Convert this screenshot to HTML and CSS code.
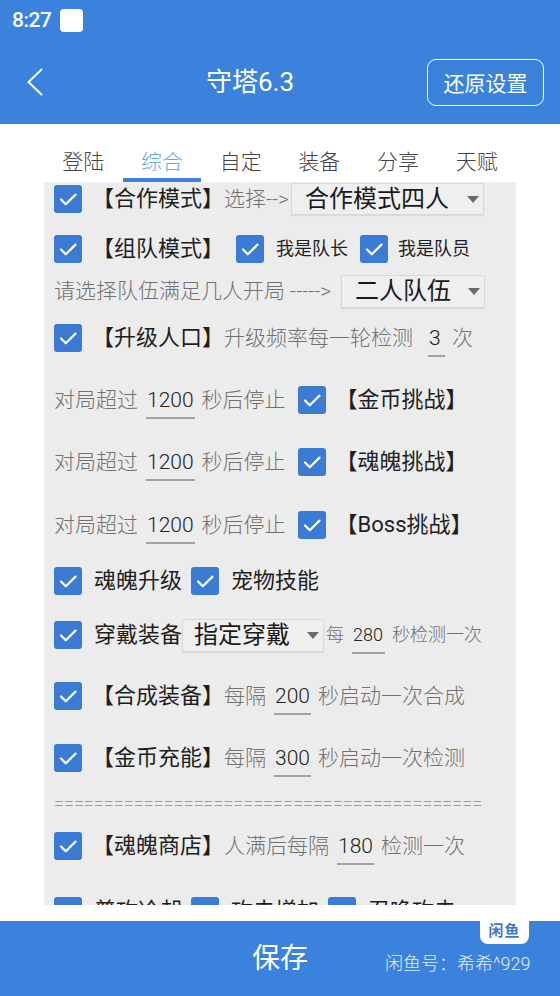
FILE: index.html
```html
<!DOCTYPE html>
<html lang="zh-CN">
<head>
<meta charset="utf-8">
<title>守塔6.3</title>
<link rel="stylesheet" href="styles.css">
</head>
<body>
<div class="screen">
  <header class="appbar">
    <div class="status"><span class="time">8:27</span><span class="notif"></span></div>
    <div class="nav">
      <svg class="back" viewBox="0 0 16 28" width="16" height="28"><polyline points="15,1 1.5,14 15,27" fill="none" stroke="#fff" stroke-width="2"/></svg>
      <div class="title">守塔6.3</div>
      <div class="reset">还原设置</div>
    </div>
  </header>

  <nav class="tabs">
    <div class="tab">登陆</div>
    <div class="tab active">综合</div>
    <div class="tab">自定</div>
    <div class="tab">装备</div>
    <div class="tab">分享</div>
    <div class="tab">天赋</div>
  </nav>

  <main class="panel">
    <div class="row">
      <span class="cb"><svg viewBox="0 0 28 28"><path d="M7 14.5l4.8 4.8L21.5 9.6"/></svg></span>
      <span class="lbl after-cb">【合作模式】</span><span class="hint">选择--&gt;</span>
      <span class="sel sel-a"><span>合作模式四人</span><i class="arr"></i></span>
    </div>

    <div class="row g16">
      <span class="cb"><svg viewBox="0 0 28 28"><path d="M7 14.5l4.8 4.8L21.5 9.6"/></svg></span>
      <span class="lbl after-cb">【组队模式】</span>
      <span class="cb next"><svg viewBox="0 0 28 28"><path d="M7 14.5l4.8 4.8L21.5 9.6"/></svg></span>
      <span class="lbl sm after-cb2">我是队长</span>
      <span class="cb next"><svg viewBox="0 0 28 28"><path d="M7 14.5l4.8 4.8L21.5 9.6"/></svg></span>
      <span class="lbl sm after-cb">我是队员</span>
    </div>

    <div class="row g8">
      <span class="hint">请选择队伍满足几人开局 -----&gt;</span>
      <span class="sel sel-b"><span>二人队伍</span><i class="arr"></i></span>
    </div>

    <div class="row g13">
      <span class="cb"><svg viewBox="0 0 28 28"><path d="M7 14.5l4.8 4.8L21.5 9.6"/></svg></span>
      <span class="lbl after-cb">【升级人口】</span><span class="hint">升级频率每一轮检测</span>
      <span class="inp one">3</span><span class="hint">次</span>
    </div>

    <div class="row g28">
      <span class="hint">对局超过</span><span class="inp">1200</span><span class="hint">秒后停止</span>
      <span class="cb next"><svg viewBox="0 0 28 28"><path d="M7 14.5l4.8 4.8L21.5 9.6"/></svg></span>
      <span class="lbl after-cb">【金币挑战】</span>
    </div>

    <div class="row g28">
      <span class="hint">对局超过</span><span class="inp">1200</span><span class="hint">秒后停止</span>
      <span class="cb next"><svg viewBox="0 0 28 28"><path d="M7 14.5l4.8 4.8L21.5 9.6"/></svg></span>
      <span class="lbl after-cb">【魂魄挑战】</span>
    </div>

    <div class="row g29">
      <span class="hint">对局超过</span><span class="inp">1200</span><span class="hint">秒后停止</span>
      <span class="cb next"><svg viewBox="0 0 28 28"><path d="M7 14.5l4.8 4.8L21.5 9.6"/></svg></span>
      <span class="lbl after-cb">【Boss挑战】</span>
    </div>

    <div class="row g22">
      <span class="cb"><svg viewBox="0 0 28 28"><path d="M7 14.5l4.8 4.8L21.5 9.6"/></svg></span>
      <span class="lbl after-cb2">魂魄升级</span>
      <span class="cb near"><svg viewBox="0 0 28 28"><path d="M7 14.5l4.8 4.8L21.5 9.6"/></svg></span>
      <span class="lbl after-cb2">宠物技能</span>
    </div>

    <div class="row g20">
      <span class="cb"><svg viewBox="0 0 28 28"><path d="M7 14.5l4.8 4.8L21.5 9.6"/></svg></span>
      <span class="lbl after-cb2">穿戴装备</span>
      <span class="sel sel-c"><span>指定穿戴</span><i class="arr"></i></span>
      <span class="hint sm tight">每</span><span class="inp sm">280</span><span class="hint sm">秒检测一次</span>
    </div>

    <div class="row g27">
      <span class="cb"><svg viewBox="0 0 28 28"><path d="M7 14.5l4.8 4.8L21.5 9.6"/></svg></span>
      <span class="lbl after-cb">【合成装备】</span><span class="hint">每隔</span>
      <span class="inp">200</span><span class="hint">秒启动一次合成</span>
    </div>

    <div class="row g28">
      <span class="cb"><svg viewBox="0 0 28 28"><path d="M7 14.5l4.8 4.8L21.5 9.6"/></svg></span>
      <span class="lbl after-cb">【金币充能】</span><span class="hint">每隔</span>
      <span class="inp">300</span><span class="hint">秒启动一次检测</span>
    </div>

    <div class="row sep g11">===========================================</div>

    <div class="row g9">
      <span class="cb"><svg viewBox="0 0 28 28"><path d="M7 14.5l4.8 4.8L21.5 9.6"/></svg></span>
      <span class="lbl after-cb">【魂魄商店】</span><span class="hint">人满后每隔</span>
      <span class="inp">180</span><span class="hint">检测一次</span>
    </div>

    <div class="row g31">
      <span class="cb"><svg viewBox="0 0 28 28"><path d="M7 14.5l4.8 4.8L21.5 9.6"/></svg></span>
      <span class="lbl after-cb2">普攻冷却</span>
      <span class="cb near"><svg viewBox="0 0 28 28"><path d="M7 14.5l4.8 4.8L21.5 9.6"/></svg></span>
      <span class="lbl after-cb2">攻击增加</span>
      <span class="cb near"><svg viewBox="0 0 28 28"><path d="M7 14.5l4.8 4.8L21.5 9.6"/></svg></span>
      <span class="lbl after-cb2">召唤攻击</span>
    </div>
  </main>

  <div class="spacer"></div>

  <footer class="savebar">
    <span class="save">保存</span>
    <span class="xianyu">闲鱼号：希希^929</span>
    <span class="logo">闲鱼</span>
  </footer>
</div>
</body>
</html>
```

FILE: styles.css
```css
* { box-sizing: border-box; }
html, body { margin: 0; padding: 0; background: #fff; }
body {
  font-family: Roboto, "Noto Sans CJK SC", "Noto Sans", sans-serif;
  font-weight: 300;
  color: #1e1e1e;
}
.screen {
  width: 560px;
  height: 996px;
  overflow: hidden;
  display: flex;
  flex-direction: column;
}

/* header */
.appbar {
  height: 124px;
  flex: none;
  background: #3b82dd;
  color: #fff;
}
.status {
  height: 40px;
  display: flex;
  align-items: center;
  padding-left: 12px;
}
.time {
  font-size: 21px;
  font-weight: 500;
  letter-spacing: -0.5px;
  line-height: 24px;
}
.notif {
  width: 23px;
  height: 23px;
  margin-left: 9px;
  border-radius: 4px;
  background: #fff;
}
.nav {
  height: 84px;
  display: flex;
  align-items: center;
}
.back {
  margin-left: 27px;
  flex: none;
}
.title {
  flex: 1;
  text-align: center;
  padding-left: 30px;
  font-size: 26px;
  line-height: 30px;
  font-weight: 400;
}
.reset {
  width: 117px;
  height: 47px;
  margin-right: 16px;
  border: 1.5px solid #fff;
  border-radius: 9px;
  display: flex;
  align-items: center;
  justify-content: center;
  font-size: 21px;
  font-weight: 400;
}

/* tabs */
.tabs {
  height: 58px;
  flex: none;
  margin: 0 44px;
  display: flex;
}
.tab {
  flex: 1;
  text-align: center;
  padding-top: 24px;
  font-size: 21px;
  line-height: 28px;
  color: #444;
  border-bottom: 4px solid transparent;
}
.tab.active {
  color: #6aa6e6;
  border-bottom-color: #3f7fd6;
}

/* panel */
.panel {
  height: 723px;
  flex: none;
  margin: 0 44px;
  padding-left: 10px;
  background: #ececec;
  overflow: hidden;
}
.row {
  display: flex;
  align-items: center;
  height: 34px;
  white-space: nowrap;
  flex: none;
}
.g8 { margin-top: 8px; }
.g9 { margin-top: 9px; }
.g11 { margin-top: 11px; }
.g13 { margin-top: 13px; }
.g16 { margin-top: 16px; }
.g20 { margin-top: 20px; }
.g22 { margin-top: 22px; }
.g27 { margin-top: 27px; }
.g28 { margin-top: 28px; }
.g29 { margin-top: 29px; }
.g31 { margin-top: 31px; }

.cb {
  width: 28px;
  height: 28px;
  flex: none;
  border-radius: 3px;
  background: #3b7bd4;
}
.cb svg {
  display: block;
  width: 28px;
  height: 28px;
  fill: none;
  stroke: #fff;
  stroke-width: 2.2;
  stroke-linecap: round;
  stroke-linejoin: round;
}
.cb.next { margin-left: 12px; }
.cb.near { margin-left: 9px; }

.lbl {
  font-size: 22px;
  line-height: 28px;
  font-weight: 400;
  color: #1e1e1e;
}
.lbl.sm { font-size: 18px; }
.after-cb { margin-left: 10px; }
.after-cb2 { margin-left: 12px; }

.hint {
  font-size: 21px;
  line-height: 28px;
  color: #717171;
}
.hint.sm { font-size: 18px; }
.hint.tight { margin-left: 2px; }

.inp {
  font-size: 21px;
  line-height: 24px;
  color: #222;
  padding: 0 1px 5px;
  margin: 7px 7px 0 8px;
  border-bottom: 2px solid #a2a2a2;
}
.inp.one {
  min-width: 17px;
  margin-left: 15px;
}
.inp.sm {
  font-size: 18px;
  margin-left: 8px;
  padding-right: 2px;
}

.sel {
  height: 32px;
  display: flex;
  align-items: center;
  justify-content: space-between;
  padding: 0 4px 0 13px;
  background: #efefef;
  border: 1px solid #d9d9d9;
  box-shadow: 0 1px 1px rgba(0, 0, 0, 0.07);
  font-size: 24px;
  line-height: 30px;
  font-weight: 400;
  color: #1a1a1a;
}
.sel-a { width: 193px; margin-left: 2px; }
.sel-b { width: 144px; margin-left: 10px; height: 33px; }
.sel-c { width: 142px; margin-left: 0; height: 33px; padding-left: 11px; }
.arr {
  width: 0;
  height: 0;
  border-left: 6px solid transparent;
  border-right: 6px solid transparent;
  border-top: 7px solid #6a6a6a;
}

.sep {
  font-size: 18px;
  color: #9a9a9a;
}

.spacer { height: 16px; flex: none; }

/* footer */
.savebar {
  height: 75px;
  flex: none;
  position: relative;
  background: #3b82dd;
  display: flex;
  align-items: center;
  justify-content: center;
}
.save {
  font-size: 28px;
  line-height: 34px;
  font-weight: 400;
  color: #fff;
}
.xianyu {
  position: absolute;
  left: 385px;
  top: 32px;
  font-size: 18px;
  line-height: 22px;
  color: #e4ecf8;
}
.logo {
  position: absolute;
  left: 480px;
  top: 0;
  width: 49px;
  height: 23px;
  background: #fff;
  border-radius: 0 0 8px 8px;
  color: #3f78c8;
  font-size: 15px;
  font-weight: 700;
  line-height: 21px;
  text-align: center;
  letter-spacing: 1px;
}
```
